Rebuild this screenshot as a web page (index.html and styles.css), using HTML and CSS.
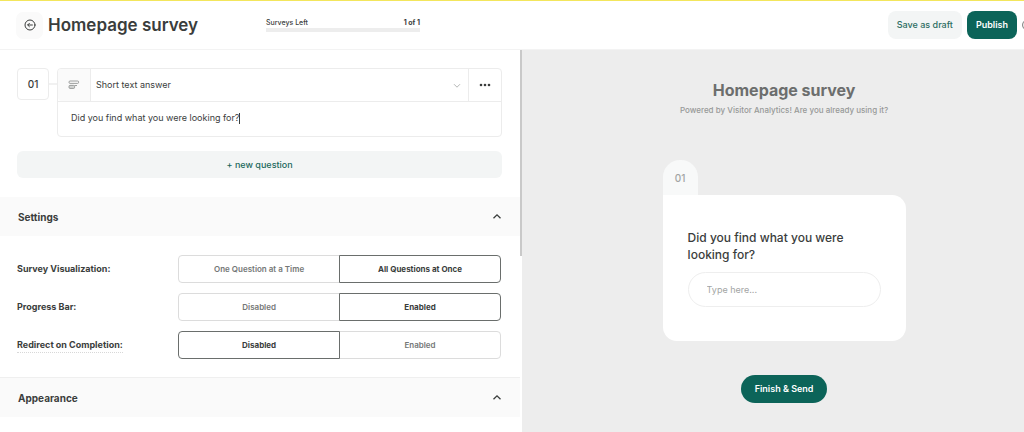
FILE: index.html
```html
<!DOCTYPE html>
<html lang="en">
<head>
<meta charset="utf-8">
<meta name="viewport" content="width=device-width, initial-scale=1">
<title>Homepage survey</title>
<link rel="stylesheet" href="styles.css">
</head>
<body>
<header class="topbar">
  <button class="back" type="button" aria-label="Back">
    <svg width="12" height="12" viewBox="0 0 12 12" fill="none" stroke="currentColor" stroke-linecap="round" stroke-linejoin="round"><circle cx="6" cy="6" r="5"/><path d="M8.4 6H3.8M5.4 4.3 3.7 6l1.7 1.7"/></svg>
  </button>
  <h1 class="title">Homepage survey</h1>
  <div class="quota">
    <div class="quota-text"><span>Surveys Left</span><strong>1 of 1</strong></div>
    <div class="quota-bar"></div>
  </div>
  <div class="actions">
    <button class="btn btn-soft" type="button">Save as draft</button>
    <button class="btn btn-primary" type="button">Publish</button>
    <button class="help" type="button" aria-label="Help">
      <svg width="12" height="12" viewBox="0 0 12 12" fill="none" stroke="currentColor"><circle cx="6" cy="6" r="5.4"/></svg>
    </button>
  </div>
</header>
<main class="workspace">
  <section class="editor" aria-label="Editor">
    <div class="scroll-thumb"></div>
    <div class="questions">
      <div class="question">
        <span class="number">01</span>
        <span class="link"></span>
        <div class="question-card">
          <div class="type-row">
            <span class="type-icon">
              <svg width="12" height="10" viewBox="0 0 12 10" fill="none" stroke="currentColor" stroke-width=".8"><rect x="1" y="1" width="9.6" height="2.4" rx="1"/><rect x="1" y="5.4" width="5.6" height="3" rx="1" fill="#d4d6d5"/><path d="M6.6 5.5H9"/></svg>
            </span>
            <label class="type-field">
              <select class="type-select" aria-label="Question type"><option>Short text answer</option></select>
              <svg class="chevron-down" width="8" height="6" viewBox="0 0 8 6" fill="none" stroke="currentColor"><path d="m1 1.2 3 3 3-3"/></svg>
            </label>
            <button class="more" type="button" aria-label="More options">
              <svg width="12" height="4" viewBox="0 0 12 4" fill="currentColor"><circle cx="2" cy="2" r="1.3"/><circle cx="6" cy="2" r="1.3"/><circle cx="10" cy="2" r="1.3"/></svg>
            </button>
          </div>
          <div class="text-row">
            <input class="question-text" type="text" aria-label="Question text" value="Did you find what you were looking for?">
            <span class="caret"></span>
          </div>
        </div>
      </div>
      <button class="add" type="button">+ new question</button>
    </div>
    <h2 class="section-head">
      <button class="section-toggle" type="button" aria-expanded="true">Settings
        <svg width="10" height="7" viewBox="0 0 10 7" fill="none" stroke="currentColor" stroke-width="1.3"><path d="m1.5 5.3 3.5-3.5 3.5 3.5"/></svg>
      </button>
    </h2>
    <div class="settings">
      <div class="setting" role="radiogroup" aria-labelledby="l1">
        <span class="setting-label" id="l1">Survey Visualization:</span>
        <div class="segmented">
          <label class="segment"><input type="radio" name="view"><span>One Question at a Time</span></label>
          <label class="segment"><input type="radio" name="view" checked><span>All Questions at Once</span></label>
        </div>
      </div>
      <div class="setting" role="radiogroup" aria-labelledby="l2">
        <span class="setting-label" id="l2">Progress Bar:</span>
        <div class="segmented">
          <label class="segment"><input type="radio" name="progress"><span>Disabled</span></label>
          <label class="segment"><input type="radio" name="progress" checked><span>Enabled</span></label>
        </div>
      </div>
      <div class="setting" role="radiogroup" aria-labelledby="l3">
        <span class="setting-label"><span class="hint" id="l3">Redirect on Completion:</span></span>
        <div class="segmented">
          <label class="segment"><input type="radio" name="redirect" checked><span>Disabled</span></label>
          <label class="segment"><input type="radio" name="redirect"><span>Enabled</span></label>
        </div>
      </div>
    </div>
    <h2 class="section-head section-ruled">
      <button class="section-toggle" type="button" aria-expanded="true">Appearance
        <svg width="10" height="7" viewBox="0 0 10 7" fill="none" stroke="currentColor" stroke-width="1.3"><path d="m1.5 5.3 3.5-3.5 3.5 3.5"/></svg>
      </button>
    </h2>
  </section>
  <section class="preview" aria-label="Preview">
    <h2 class="preview-title">Homepage survey</h2>
    <p class="preview-sub">Powered by Visitor Analytics! Are you already using it?</p>
    <div class="preview-question">
      <span class="tab">01</span>
      <div class="preview-card">
        <label class="preview-label" for="answer">Did you find what you were looking for?</label>
        <input class="answer" id="answer" type="text" placeholder="Type here...">
      </div>
    </div>
    <button class="finish" type="button">Finish &amp; Send</button>
  </section>
</main>
</body>
</html>
```
FILE: styles.css
```css
* { box-sizing: border-box; }
body {
  margin: 0;
  min-height: 100vh;
  display: flex;
  flex-direction: column;
  overflow: hidden;
  background: #fff;
  color: #3a3d3c;
  font: 9px/12px Inter, "Liberation Sans", sans-serif;
}
button, input, select { font: inherit; color: inherit; margin: 0; }
button { border: 0; padding: 0; cursor: pointer; }
svg { display: block; flex: none; }

.topbar {
  display: flex;
  align-items: center;
  height: 50px;
  padding: 0 0 0 16px;
  border-top: 1px solid #f3e65c;
  border-bottom: 1px solid #f3f3f3;
}
.back {
  display: grid;
  place-items: center;
  width: 27px;
  height: 27px;
  border-radius: 7px;
  background: #fafafa;
}
.title { margin: 0 0 0 5px; font-size: 17px; line-height: 24px; font-weight: 600; white-space: nowrap; }
.quota { width: 154px; margin-left: 68px; font-size: 7px; line-height: 9px; font-weight: 500; }
.quota-text { display: flex; justify-content: space-between; }
.quota-text strong { font-weight: 700; }
.quota-bar { height: 4px; margin-top: 1px; background: #ededed; }
.actions { display: flex; align-items: center; gap: 5px; margin-left: auto; margin-right: -10px; }
.btn { height: 28px; padding: 0 9px; border-radius: 8px; font-weight: 600; white-space: nowrap; }
.btn-soft { background: #f3f5f5; color: #2d6d62; font-weight: 500; }
.btn-primary { background: #0c6459; color: #fff; }
.help { background: none; color: #777; }

.workspace { flex: 1; display: grid; grid-template-columns: 51fr 49fr; }
.editor { position: relative; min-width: 0; padding-right: 2px; }
.scroll-thumb { position: absolute; top: 0; right: 0; width: 2px; height: 206px; background: #c9c9c9; }
.questions { padding: 18px 18px 19px 17px; }
.question { display: flex; align-items: flex-start; }
.number {
  display: grid;
  place-items: center;
  width: 32px;
  height: 32px;
  border: 1px solid #ececec;
  border-radius: 4px;
  font-size: 10px;
  font-weight: 500;
}
.link { width: 8px; height: 2px; margin-top: 15px; background: #f1f1f1; }
.question-card { flex: 1; border: 1px solid #ececec; border-radius: 4px; }
.type-row { display: flex; height: 33px; border-bottom: 1px solid #ececec; }
.type-icon {
  display: grid;
  place-items: center;
  width: 33px;
  border-right: 1px solid #ececec;
  border-radius: 4px 0 0 4px;
  background: #fafafa;
  color: #868988;
}
.type-field { position: relative; flex: 1; display: flex; }
.type-select { flex: 1; appearance: none; border: 0; padding: 0 5px; background: none; }
.chevron-down { position: absolute; right: 7px; top: 14px; color: #b5b7b6; pointer-events: none; }
.more { display: grid; place-items: center; width: 33px; border-left: 1px solid #ececec; background: none; }
.text-row { display: flex; align-items: center; height: 34px; padding: 0 13px 2px; }
.question-text { field-sizing: content; border: 0; padding: 0; background: none; outline: 0; }
.caret { width: 1px; height: 11px; background: #3a3d3c; }
.add {
  display: block;
  width: 100%;
  height: 27px;
  margin-top: 14px;
  border-radius: 6px;
  background: #f3f5f5;
  color: #22685c;
  font-weight: 500;
}

.section-head { margin: 0; font-size: 10px; line-height: 16px; }
.section-ruled { border-top: 1px solid #efefef; }
.section-toggle {
  display: flex;
  align-items: center;
  justify-content: space-between;
  width: 100%;
  height: 39px;
  padding: 0 18px;
  background: #fafafa;
  font-weight: 700;
}
.settings { display: grid; gap: 10px; padding: 19px 19px 18px 17px; }
.setting { display: grid; grid-template-columns: 1fr 2fr; align-items: center; }
.setting-label { font-weight: 700; }
.hint { padding-bottom: 2px; border-bottom: 1px dotted #d8d8d8; }
.segmented { display: grid; grid-template-columns: 1fr 1fr; }
.segment { position: relative; color: #747776; font-size: 8px; font-weight: 600; }
.segment + .segment { margin-left: -1px; }
.segment input { position: absolute; inset: 0; opacity: 0; }
.segment span {
  display: grid;
  place-items: center;
  height: 28px;
  border: 1px solid #dcdcdc;
  border-radius: 4px 0 0 4px;
}
.segment + .segment span { border-radius: 0 4px 4px 0; }
.segment input:checked + span { border-color: #6a6e6c; color: #3a3d3c; font-weight: 700; }
.segment:has(input:checked) { z-index: 1; }

.preview {
  display: flex;
  flex-direction: column;
  align-items: center;
  padding: 28px 0 28px 22px;
  background: #ededed;
}
.preview-title { margin: 0; font-size: 16px; line-height: 24px; font-weight: 700; color: #6c6e6d; }
.preview-sub { margin: 2px 0 0; font-size: 8px; font-weight: 500; color: #979998; }
.preview-question { width: 243px; margin-top: 44px; }
.tab {
  display: grid;
  place-items: center;
  width: 35px;
  height: 35px;
  border-radius: 17px 17px 0 0;
  background: #f8f9f9;
  color: #a3a5a4;
  font-size: 10px;
  font-weight: 500;
}
.preview-card { padding: 34px 25px; border-radius: 0 14px 14px 14px; background: #fff; }
.preview-label { display: block; font-size: 12px; line-height: 17px; font-weight: 500; }
.answer {
  display: block;
  width: 100%;
  height: 35px;
  margin-top: 9px;
  padding: 0 18px;
  border: 1px solid #eee;
  border-radius: 18px;
  background: #fff;
}
.answer::placeholder { color: #a3a5a4; opacity: 1; }
.finish {
  height: 28px;
  margin-top: 34px;
  padding: 0 14px;
  border-radius: 14px;
  background: #0c6459;
  color: #fff;
  font-weight: 600;
}
```
